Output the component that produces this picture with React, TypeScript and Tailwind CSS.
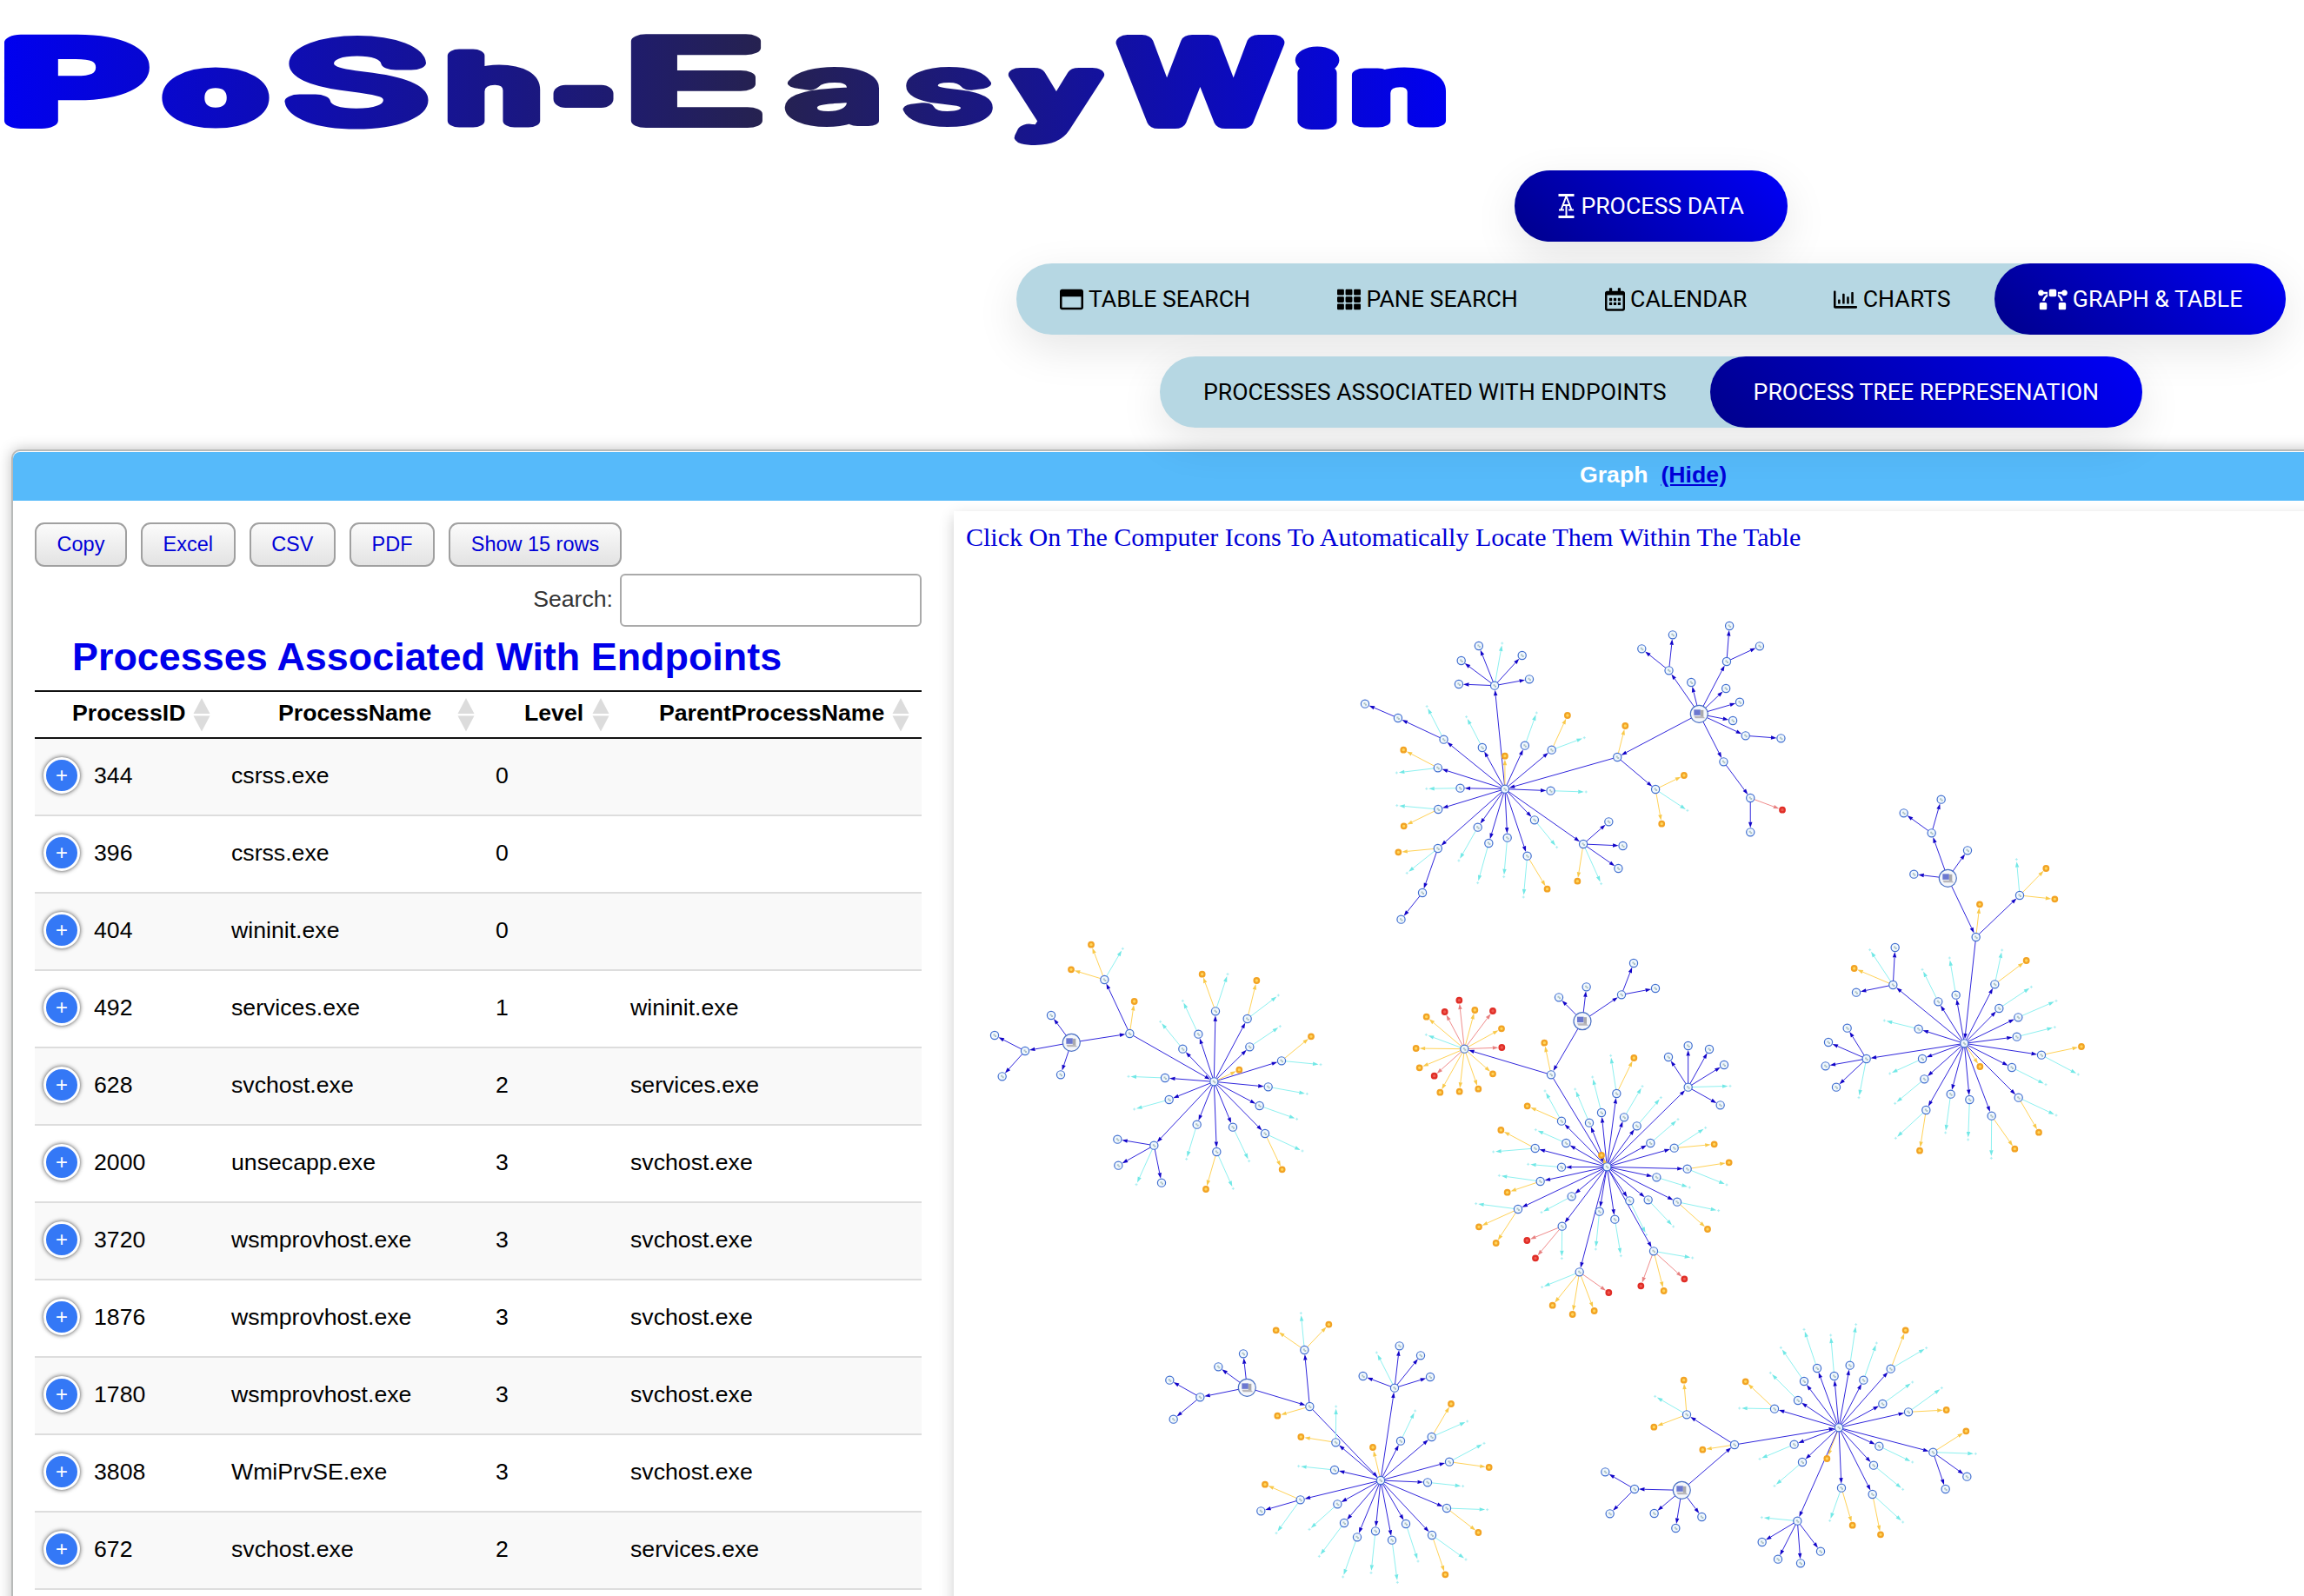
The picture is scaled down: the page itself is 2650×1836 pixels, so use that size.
import { ReactNode } from "react";
import {
  FaBezierCurve,
  FaRegCalendarAlt,
  FaRegChartBar,
  FaRegWindowMaximize,
  FaTh,
} from "react-icons/fa";

/* ---------- wordmark ---------- */

type Glyph = { ch: string; x: number; w: number; size: number; y?: number; s?: number; wt?: number };

const WORDMARK: Glyph[] = [
  { ch: "P", x: 1, w: 166, size: 124, s: 18, wt: 400 },
  { ch: "o", x: 192, w: 112, size: 97, s: 15, wt: 500 },
  { ch: "S", x: 328, w: 164, size: 122, s: 16, wt: 300 },
  { ch: "h", x: 514, w: 108, size: 103, s: 15, wt: 400 },
  { ch: "-", x: 640, w: 62, size: 100, y: 142, s: 20, wt: 300 },
  { ch: "E", x: 717, w: 161, size: 126, s: 16, wt: 300 },
  { ch: "a", x: 905, w: 111, size: 102, s: 12, wt: 300 },
  { ch: "s", x: 1039, w: 102, size: 102, s: 12, wt: 300 },
  { ch: "y", x: 1169, w: 92, size: 97, s: 16, wt: 400 },
  { ch: "W", x: 1292, w: 177, size: 124, s: 18, wt: 400 },
  { ch: "i", x: 1496, w: 38, size: 100, s: 20, wt: 400 },
  { ch: "n", x: 1555, w: 108, size: 97, s: 15, wt: 400 },
];

function Wordmark() {
  return (
    <svg width="1700" height="196" viewBox="0 0 1700 196" className="block">
      <defs>
        <linearGradient id="wm" gradientUnits="userSpaceOnUse" x1="0" y1="0" x2="1665" y2="0">
          <stop offset="0" stopColor="#0000f0" />
          <stop offset="0.53" stopColor="#26224f" />
          <stop offset="1" stopColor="#0000f0" />
        </linearGradient>
      </defs>
      <text
        fontFamily="Inter, 'DejaVu Sans', sans-serif"
        fill="url(#wm)"
        stroke="url(#wm)"
        strokeLinejoin="round"
      >
        {WORDMARK.map((g, i) => (
          <tspan
            key={i}
            x={g.x}
            y={g.y ?? 139}
            fontSize={g.size}
            fontWeight={g.wt ?? 400}
            strokeWidth={g.s ?? 18}
            textLength={g.w}
            lengthAdjust="spacingAndGlyphs"
          >
            {g.ch}
          </tspan>
        ))}
      </text>
    </svg>
  );
}

/* ---------- tabs ---------- */

function Tab({ active, icon, children }: { active?: boolean; icon?: ReactNode; children: ReactNode }) {
  return (
    <div
      className={
        active
          ? "flex h-full items-center gap-[6.300px] rounded-full bg-[linear-gradient(45deg,#00008b,#0000f8)] px-[50px] text-white"
          : "flex h-full items-center gap-[6.300px] px-[50px] text-black"
      }
    >
      {icon}
      <span className="whitespace-nowrap">{children}</span>
    </div>
  );
}

function TabRow({ children }: { children: ReactNode }) {
  return (
    <nav className="flex h-[82px] rounded-full bg-[#b6d7e3] font-['Roboto',sans-serif] text-[26.67px] shadow-[0_16px_50px_rgba(0,0,0,0.1)]">
      {children}
    </nav>
  );
}

function ProcessIcon() {
  return (
    <svg width="20" height="28" viewBox="0 0 20 28" fill="none" stroke="currentColor">
      <path d="M0.5 1.5H18.5M0.5 26.5H18.5" strokeWidth="3" />
      <path d="M3.5 18.5L9 4H10L15.5 18.5M6 13H13M1 18.5H7M12 18.5H18" strokeWidth="2" />
      <path d="M9.5 14V25" strokeWidth="2" />
    </svg>
  );
}

/* ---------- table ---------- */

const ROWS: [string, string, string, string][] = [
  ["344", "csrss.exe", "0", ""],
  ["396", "csrss.exe", "0", ""],
  ["404", "wininit.exe", "0", ""],
  ["492", "services.exe", "1", "wininit.exe"],
  ["628", "svchost.exe", "2", "services.exe"],
  ["2000", "unsecapp.exe", "3", "svchost.exe"],
  ["3720", "wsmprovhost.exe", "3", "svchost.exe"],
  ["1876", "wsmprovhost.exe", "3", "svchost.exe"],
  ["1780", "wsmprovhost.exe", "3", "svchost.exe"],
  ["3808", "WmiPrvSE.exe", "3", "svchost.exe"],
  ["672", "svchost.exe", "2", "services.exe"],
];

function Sort() {
  return (
    <svg width="20" height="40" viewBox="0 0 20 40" className="shrink-0" fill="#dcdcdc">
      <path d="M10 1L19.5 19H0.5Z" />
      <path d="M0.5 21.500H19.500L10 39.500Z" />
    </svg>
  );
}

function Head({ className, children }: { className: string; children: ReactNode }) {
  return (
    <div className={`flex items-center justify-between ${className}`}>
      <span className="pb-[4px]">{children}</span>
      <Sort />
    </div>
  );
}

function ProcessTable() {
  return (
    <div className="w-[1020px] shrink-0 pt-[25px] text-[26.67px] text-black">
      <div className="flex gap-4">
        {["Copy", "Excel", "CSV", "PDF", "Show 15 rows"].map((b) => (
          <button
            key={b}
            className="h-[51px] rounded-[11px] border-2 border-[#a0a0a0] bg-linear-to-b from-[#fbfbfb] to-[#e3e3e3] px-[23.600px] text-[23.470px] leading-none whitespace-nowrap text-[#0000d8]"
          >
            {b}
          </button>
        ))}
      </div>
      <div className="mt-2 flex items-center justify-end gap-[8px] text-[#333]">
        <span className="pb-[3px]">Search:</span>
        <input className="h-[61px] w-[347px] rounded-[6px] border-2 border-[#aaa] bg-white" />
      </div>
      <div className="mt-[12px] h-[61px] pl-[43px] text-[44.900px] leading-[46px] font-bold whitespace-nowrap text-[#0000ea]">
        Processes Associated With Endpoints
      </div>
      <div className="flex h-[56px] border-y-2 border-[#111] font-bold">
        <Head className="ml-[43px] w-[159px]">ProcessID</Head>
        <Head className="ml-[78px] w-[226px]">ProcessName</Head>
        <Head className="ml-[57px] w-[98px]">Level</Head>
        <Head className="ml-[57px] w-[288px]">ParentProcessName</Head>
      </div>
      {ROWS.map(([id, name, level, parent], i) => (
        <div
          key={i}
          className="flex h-[89px] items-center border-b-2 border-[#dddddd] pb-[3px] odd:bg-[#f9f9f9] even:bg-white"
        >
          <div className="ml-[10px] flex size-[42px] shrink-0 items-center justify-center rounded-full border-[3.500px] border-white bg-[#3478f6] shadow-[0_0_5px_#444]">
            <span className="pt-[3px] font-['Liberation_Mono',monospace] text-[24px] leading-none text-white">+</span>
          </div>
          <span className="ml-4 w-[158px]">{id}</span>
          <span className="w-[304px]">{name}</span>
          <span className="w-[155px]">{level}</span>
          <span>{parent}</span>
        </div>
      ))}
    </div>
  );
}

/* ---------- process graph ---------- */

type Kind = "host" | "proc" | "warn" | "alert" | "net";
type Node = { k: Kind; x: number; y: number; kids: Node[] };

const make =
  (k: Kind) =>
  (x: number, y: number, ...kids: Node[]): Node => ({ k, x, y, kids });
const h = make("host");
const p = make("proc");
const o = make("warn");
const r = make("alert");
const c = make("net");

type Cluster = { ox: number; oy: number; sx: number; sy: number; root: Node };

const CLUSTERS: Cluster[] = [
  {
    ox: 1500, oy: 680, sx: 2.529, sy: 3,
    root: h(1149, 424,
      p(1061, 274, p(982, 199), p(1072, 151)),
      p(1126, 315),
      p(1229, 243, p(1237, 120), p(1325, 190)),
      p(1227, 336), p(1267, 383), p(1247, 447),
      p(1284, 499, p(1387, 508)),
      p(1220, 589, p(1298, 714, r(1391, 755), p(1298, 832))),
      p(911, 573,
        o(934, 465),
        p(1022, 684, o(1105, 636), c(1115, 757), o(1040, 803)),
        p(584, 683,
          p(554, 326, p(508, 189), c(576, 180), p(634, 222), p(457, 240), p(450, 321), p(655, 304)),
          o(584, 569),
          p(406, 512, c(357, 398), p(273, 438, p(177, 389))),
          p(518, 540, c(472, 434)),
          p(642, 533, c(676, 420)),
          p(720, 548, o(766, 429), c(815, 506)),
          p(389, 610, o(289, 548), c(269, 627)),
          p(454, 680, c(356, 682)),
          p(717, 689, c(820, 693)),
          p(390, 753, c(270, 740), o(290, 811)),
          p(389, 888, o(274, 901), c(299, 973), p(344, 1041, p(282, 1133))),
          p(505, 815, c(450, 930)),
          p(537, 870, c(505, 1007)),
          p(591, 851, c(581, 986)),
          p(670, 790, c(735, 884)),
          p(649, 914, c(638, 1056), o(707, 1028)),
          p(812, 873, p(886, 796), p(927, 879), p(914, 957), c(864, 1010), o(795, 1001)),
        ),
      ),
    ),
  },
  {
    ox: 2060, oy: 880, sx: 3, sy: 3,
    root: h(541, 391,
      p(485, 235, p(389, 166), p(518, 119)),
      p(609, 295), p(424, 377),
      p(638, 594,
        o(651, 481),
        p(789, 450, c(778, 326), o(880, 357), o(910, 463)),
        p(598, 961,
          p(352, 759, p(359, 630), c(272, 638), o(218, 702), p(225, 785)),
          p(508, 817, c(453, 706)),
          p(569, 794, c(547, 666)),
          p(703, 757, c(728, 639), o(812, 675)),
          p(718, 840, c(829, 766)),
          p(784, 871, c(915, 814)),
          p(779, 938, c(910, 905)),
          p(864, 1001, o(1002, 972), c(991, 1068)),
          p(762, 1044, c(879, 1103)),
          o(652, 1041),
          p(785, 1148, c(915, 1209), o(855, 1268)),
          p(692, 1211, c(691, 1357), o(772, 1325)),
          p(616, 1155, c(611, 1293)),
          p(551, 1136, c(533, 1269)),
          p(466, 1191, c(361, 1288), o(444, 1331)),
          p(460, 1084, c(359, 1168)),
          p(453, 1014, c(341, 1065)),
          p(440, 911, c(322, 882)),
          p(260, 1014, p(194, 908), p(129, 957), p(119, 1039), p(156, 1112), c(234, 1148)),
        ),
      ),
    ),
  },
  {
    ox: 1100, oy: 1050, sx: 3, sy: 3,
    root: h(397, 448,
      p(327, 354), p(360, 559),
      p(237, 477, p(132, 423), p(158, 565)),
      p(598, 417,
        p(511, 231, o(465, 110), o(396, 196), c(574, 124)),
        o(614, 306),
        p(889, 583,
          p(894, 340, o(848, 212), c(936, 212)),
          p(1004, 366, o(1036, 234), c(1111, 285)),
          p(1012, 463, c(1117, 392)),
          p(1122, 511, o(1224, 427), c(1257, 524)),
          o(976, 542),
          p(1076, 601, c(1210, 625)),
          p(1046, 666, c(1175, 712)),
          p(1065, 762, c(1194, 822), o(1124, 886)),
          p(954, 740, c(1010, 857)),
          p(898, 825, c(955, 952), o(861, 954)),
          p(830, 731, c(794, 850)),
          p(682, 803, p(556, 782), p(559, 872), c(621, 938), p(708, 932)),
          p(734, 645, c(614, 678)),
          p(720, 570, c(594, 565)),
          p(781, 470, c(704, 376)),
          p(835, 419, c(781, 304)),
        ),
      ),
    ),
  },
  {
    ox: 1580, oy: 1080, sx: 3, sy: 3,
    root: h(720, 284,
      p(639, 202), p(734, 166),
      p(855, 193, p(897, 84), p(972, 171)),
      p(612, 469,
        o(589, 359),
        p(313, 380,
          r(295, 212), r(245, 252), o(349, 246), r(411, 249), o(182, 269), o(441, 310), c(181, 331),
          r(442, 375), o(146, 378), o(158, 445), r(209, 473), o(411, 466), o(229, 530), o(296, 527), o(361, 518)),
        p(805, 787,
          p(648, 629, c(591, 525), o(530, 577)),
          p(744, 635, c(695, 519)),
          p(786, 600, c(755, 477)),
          p(838, 534, c(818, 403), o(898, 411)),
          p(864, 616, c(927, 509)),
          p(908, 646, c(991, 548)),
          p(955, 705, c(1050, 623)),
          p(1037, 722, c(1145, 652), o(1175, 709)),
          p(1082, 794, o(1226, 772), c(1218, 849)),
          p(976, 823, c(1090, 858)),
          p(1047, 908, c(1190, 938), o(1152, 1002)),
          p(947, 901, c(1034, 993)),
          p(883, 904, c(941, 1021)),
          p(966, 1078, r(922, 1198), o(1001, 1215), r(1072, 1174), c(1100, 1101)),
          p(832, 968, c(853, 1094)),
          p(779, 941, c(766, 1071)),
          p(710, 1150, c(581, 1202), o(617, 1265), o(686, 1296), o(761, 1284), r(811, 1221)),
          p(650, 992, r(529, 1041), r(558, 1102), c(649, 1103)),
          p(683, 889, c(579, 944)),
          p(498, 933, c(353, 914), o(363, 994), o(422, 1050)),
          p(575, 837, c(433, 817), o(461, 875)),
          p(648, 788, c(533, 778)),
          p(557, 723, o(439, 660), c(413, 735)),
          p(664, 705, c(559, 659)),
          p(1085, 512, p(1017, 408), p(1085, 369), p(1158, 381), p(1209, 435), c(1230, 508), p(1196, 574)),
          o(786, 747),
        ),
      ),
    ),
  },
  {
    ox: 1300, oy: 1470, sx: 3, sy: 3,
    root: h(403, 379,
      p(304, 307), p(390, 262),
      p(241, 412, p(136, 353), p(149, 488)),
      p(619, 444,
        p(601, 249, o(503, 181), c(589, 122), o(685, 161)),
        o(508, 476),
        p(864, 699,
          p(912, 380, p(803, 339), c(850, 258), p(929, 235), p(1002, 268), p(1035, 342)),
          p(933, 563, c(983, 459)),
          p(1040, 549, o(1107, 435), c(1163, 495)),
          p(1101, 635, c(1221, 571), o(1238, 654)),
          p(1026, 706, c(1148, 719)),
          p(1092, 795, c(1232, 800), o(1201, 879)),
          p(1041, 888, c(1158, 972), o(1087, 1024)),
          p(951, 849, c(993, 978)),
          p(903, 905, c(922, 1051)),
          p(846, 874, c(831, 1018)),
          p(783, 895, c(734, 1032)),
          p(738, 846, c(652, 961)),
          p(715, 781, c(618, 868)),
          p(587, 766, o(465, 713), p(451, 805), c(504, 881)),
          p(705, 663, c(581, 650)),
          p(709, 568, c(710, 444), o(589, 549)),
          o(837, 585),
        ),
      ),
    ),
  },
  {
    ox: 1800, oy: 1480, sx: 3, sy: 3,
    root: h(403, 703,
      p(308, 783), p(382, 834), p(472, 795),
      p(240, 699, p(139, 640), p(155, 784)),
      p(585, 546,
        o(475, 563),
        p(420, 442, o(410, 323), c(311, 379), o(307, 485)),
        p(945, 487,
          p(723, 422, o(623, 328), c(602, 420)),
          p(804, 393, c(709, 298)),
          p(825, 327, c(745, 211)),
          p(870, 282, c(825, 148)),
          p(929, 309, c(917, 168)),
          p(983, 272, c(1004, 131)),
          p(1030, 323, c(1075, 195)),
          p(1124, 284, o(1175, 151), c(1247, 212)),
          p(1096, 405, c(1199, 330)),
          p(1185, 433, c(1300, 350), o(1316, 426)),
          p(1270, 572, o(1384, 499), c(1417, 577), p(1387, 656), p(1313, 699)),
          p(1084, 551, c(1199, 606)),
          p(1065, 617, c(1166, 700)),
          p(1061, 717, c(1166, 813), o(1089, 856)),
          p(954, 695, c(914, 808), o(992, 824)),
          o(904, 594),
          p(802, 809, c(679, 797), p(680, 882), p(735, 941), p(813, 955), p(882, 914)),
          p(819, 606, c(723, 688)),
          p(791, 545, c(672, 595)),
        ),
      ),
    ),
  },
];

const EDGE: Record<Kind, string> = {
  host: "#2a20d8",
  proc: "#3026dc",
  warn: "#ffd257",
  alert: "#f08c8c",
  net: "#8df1f0",
};
const HEAD: Record<Kind, string> = {
  host: "#1205c8",
  proc: "#1205c8",
  warn: "#f9c94a",
  alert: "#e88080",
  net: "#72e8e6",
};
const RADIUS: Record<Kind, number> = { host: 10.5, proc: 5, warn: 4, alert: 4, net: 2.5 };

type Pt = { k: Kind; x: number; y: number };

function collect(root: Node, c: Cluster) {
  const nodes: Pt[] = [];
  const edges: [Pt, Pt][] = [];
  const walk = (n: Node, from?: Pt) => {
    const pt = { k: n.k, x: c.ox + n.x / c.sx, y: c.oy + n.y / c.sy };
    nodes.push(pt);
    if (from) edges.push([from, pt]);
    n.kids.forEach((kid) => walk(kid, pt));
  };
  walk(root);
  return { nodes, edges };
}

function Edge({ a, b }: { a: Pt; b: Pt }) {
  const d = Math.hypot(b.x - a.x, b.y - a.y);
  const ux = (b.x - a.x) / d;
  const uy = (b.y - a.y) / d;
  const tx = b.x - ux * RADIUS[b.k];
  const ty = b.y - uy * RADIUS[b.k];
  const len = 6.5;
  const half = 2.2;
  const bx = tx - ux * len;
  const by = ty - uy * len;
  return (
    <>
      <line x1={a.x} y1={a.y} x2={bx} y2={by} stroke={EDGE[b.k]} strokeWidth="1" />
      <path
        d={`M${tx} ${ty}L${bx - uy * half} ${by + ux * half}L${bx + uy * half} ${by - ux * half}Z`}
        fill={HEAD[b.k]}
      />
    </>
  );
}

function Dot({ n }: { n: Pt }) {
  if (n.k === "host") {
    return (
      <g transform={`translate(${n.x} ${n.y})`}>
        <circle r="10" fill="#f4f7fb" stroke="#4a70c4" strokeWidth="1.200" />
        <path d="M-6 -5H1.500V1.500H-6Z" fill="#6b78d0" />
        <path d="M1.500 -4.500H5V3.500H1.500Z" fill="#a9a9ad" />
        <path d="M-6 2.500H4L7 5H-4.500Z" fill="#b9b7bb" />
      </g>
    );
  }
  if (n.k === "proc") {
    return (
      <g transform={`translate(${n.x} ${n.y})`}>
        <circle r="4.600" fill="#f0f8fd" stroke="#416fd0" strokeWidth="1.200" />
        <path d="M-1.500 -1.500H0.500V0.500H-1.500ZM0 0H2V2H0Z" fill="#8fa9ac" fillOpacity="0.700" />
      </g>
    );
  }
  if (n.k === "net") {
    return (
      <path
        d={`M${n.x - 1.5} ${n.y}H${n.x + 1.5}M${n.x} ${n.y - 1.5}V${n.y + 1.5}`}
        stroke="#a9eef2"
        strokeWidth="1"
      />
    );
  }
  return n.k === "warn" ? (
    <circle cx={n.x} cy={n.y} r="2.800" fill="#ffd65c" stroke="#f2a324" strokeWidth="2.200" />
  ) : (
    <circle cx={n.x} cy={n.y} r="2.800" fill="#ee5a50" stroke="#e02e27" strokeWidth="2.200" />
  );
}

function Graph() {
  return (
    <svg
      width="1553"
      height="1248"
      viewBox="1097 588 1553 1248"
      className="pointer-events-none absolute top-0 left-0"
    >
      {CLUSTERS.map((cl, i) => {
        const { nodes, edges } = collect(cl.root, cl);
        return (
          <g key={i}>
            {edges.map(([a, b], j) => (
              <Edge key={j} a={a} b={b} />
            ))}
            {nodes.map((n, j) => (
              <Dot key={j} n={n} />
            ))}
          </g>
        );
      })}
    </svg>
  );
}

/* ---------- page ---------- */

export default function App() {
  return (
    <div className="h-[1836px] w-[2650px] overflow-hidden bg-white font-['Liberation_Sans',sans-serif]">
      <div className="w-[3798px]">
        <Wordmark />
        <div className="flex flex-col items-center gap-[25px]">
          <TabRow>
            <Tab active icon={<ProcessIcon />}>PROCESS DATA</Tab>
          </TabRow>
          <TabRow>
            <Tab icon={<FaRegWindowMaximize size={27} />}>TABLE SEARCH</Tab>
            <Tab icon={<FaTh size={27} />}>PANE SEARCH</Tab>
            <Tab icon={<FaRegCalendarAlt className="h-[27px] w-[23px]" />}>CALENDAR</Tab>
            <Tab icon={<FaRegChartBar size={27} />}>CHARTS</Tab>
            <Tab active icon={<FaBezierCurve className="h-[27px] w-[34px]" />}>GRAPH &amp; TABLE</Tab>
          </TabRow>
          <TabRow>
            <Tab>PROCESSES ASSOCIATED WITH ENDPOINTS</Tab>
            <Tab active>PROCESS TREE REPRESENATION</Tab>
          </TabRow>
        </div>

        <section className="mt-[25px] ml-[13px] w-[3772px] rounded-t-[10px] border-2 border-[#b8bab9] bg-white pt-px shadow-[0_0_16px_rgba(0,0,0,0.25)]">
          <h2 className="flex h-14 items-center justify-center gap-[15px] rounded-t-[8px] bg-[#56bafa] pb-1 pl-[5px] text-[26.67px] font-bold text-white">
            <span>Graph</span>
            <a className="text-[#0000d8] underline">(Hide)</a>
          </h2>
          <div className="flex pl-[25px]">
            <ProcessTable />
            <div className="relative mt-3 ml-[37px] h-[1300px] w-[2650px] shrink-0 bg-white pt-3 pl-[14px] shadow-[0_6px_16px_rgba(0,0,0,0.2)]">
              <p className="font-['Liberation_Serif',serif] text-[30px] leading-9 whitespace-nowrap text-[#0000d8]">
                Click On The Computer Icons To Automatically Locate Them Within The Table
              </p>
              <Graph />
            </div>
          </div>
        </section>
      </div>
    </div>
  );
}
